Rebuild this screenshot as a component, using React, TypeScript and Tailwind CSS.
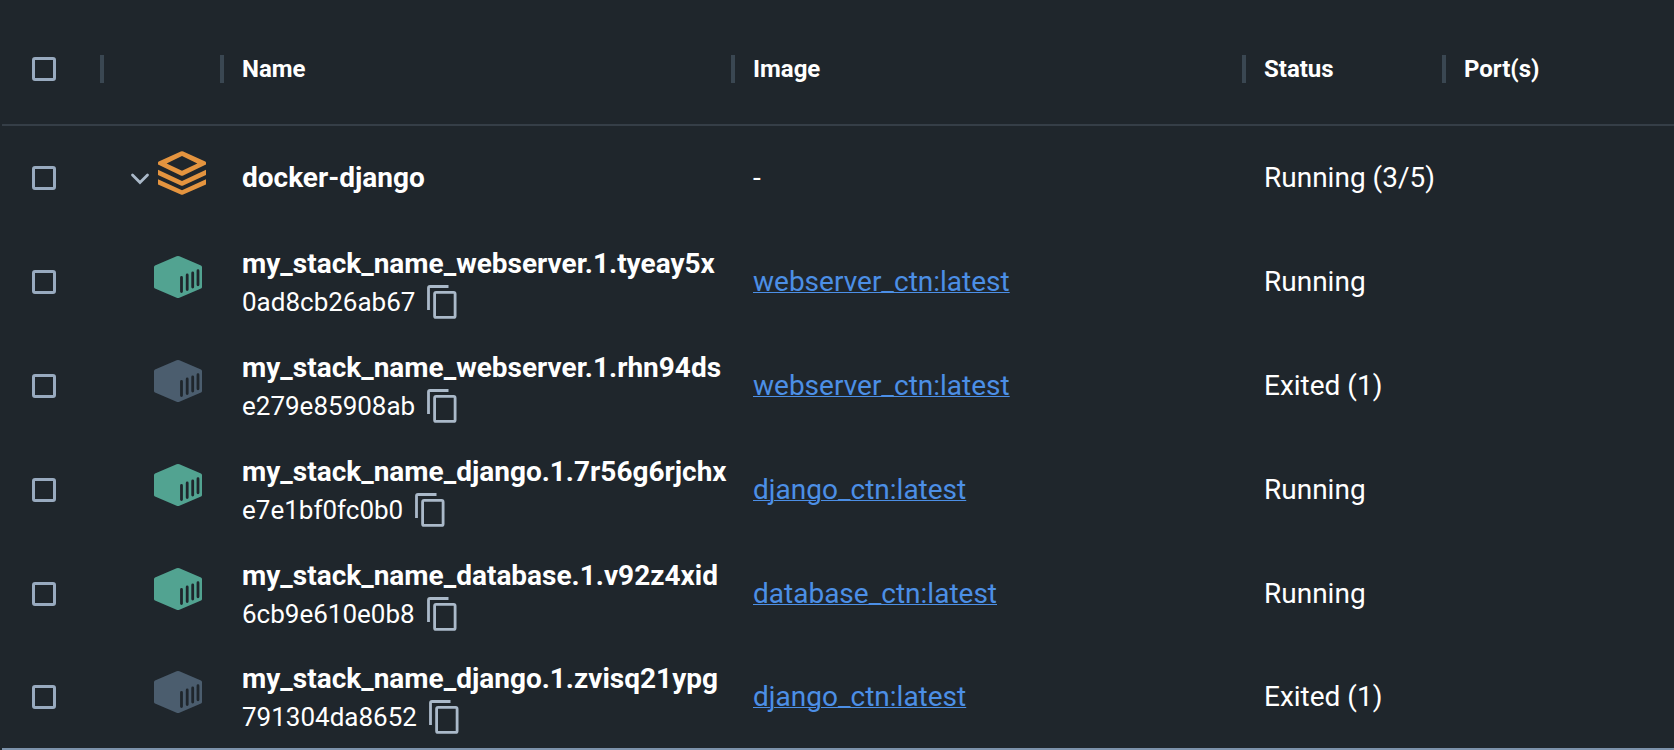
import React from "react";

type Container = { name: string; id: string; image: string; status: string; running: boolean };

const containers: Container[] = [
  { name: "my_stack_name_webserver.1.tyeay5x", id: "0ad8cb26ab67", image: "webserver_ctn:latest", status: "Running", running: true },
  { name: "my_stack_name_webserver.1.rhn94ds", id: "e279e85908ab", image: "webserver_ctn:latest", status: "Exited (1)", running: false },
  { name: "my_stack_name_django.1.7r56g6rjchx", id: "e7e1bf0fc0b0", image: "django_ctn:latest", status: "Running", running: true },
  { name: "my_stack_name_database.1.v92z4xid", id: "6cb9e610e0b8", image: "database_ctn:latest", status: "Running", running: true },
  { name: "my_stack_name_django.1.zvisq21ypg", id: "791304da8652", image: "django_ctn:latest", status: "Exited (1)", running: false },
];

function Check({ label }: { label: string }) {
  return (
    <input
      type="checkbox"
      aria-label={label}
      className="block size-6 appearance-none rounded-[3px] border-[3px] border-[#98aabf] bg-transparent checked:bg-[#98aabf]"
    />
  );
}

function StackIcon() {
  return (
    <svg width="48" height="44" viewBox="0 0 48 44" fill="#e4943f" aria-hidden="true">
      <path fillRule="evenodd" d="M22.800.5Q24 0 25.200.5L47.300 10.600Q48 11 48 11.600V13.400L25.200 24.500Q24 25 22.800 24.500L0 13.400V11.600Q0 11 .7 10.600ZM24 5 8.600 12.400 24 19.800 39.400 12.400Z" />
      <path d="M0 18.800 24 30 48 18.800V24L25.200 34.500Q24 35 22.800 34.500L0 24Z" />
      <path d="M0 28.300 24 39.200 48 28.300V33.500L25.200 43.500Q24 44 22.800 43.500L0 33.500Z" />
    </svg>
  );
}

function ContainerIcon({ running }: { running: boolean }) {
  return (
    <svg width="48" height="42" viewBox="0 0 48 42" className={running ? "text-[#52a391]" : "text-[#4b5d6e]"} aria-hidden="true">
      <path fill="currentColor" d="M22.600.3Q24-.3 25.400.3L47 9.500Q48 10 48 11V31Q48 32 47 32.500L25.400 41.700Q24 42.300 22.600 41.700L1 32.500Q0 32 0 31V11Q0 10 1 9.500Z" />
      <path d="M27.500 21.500V35.500M33.200 19V33.500M38.700 17V31M44 14.700V28.800" stroke="#1f262c" strokeWidth="2.800" strokeLinecap="round" />
    </svg>
  );
}

function CopyIcon() {
  return (
    <svg width="30" height="34" viewBox="0 0 30 34" fill="none" stroke="#aab9c9" strokeWidth="2.800" aria-hidden="true">
      <path d="M1.500 25V3Q1.500 1.500 3 1.500H21.500" />
      <rect x="7.600" y="7.400" width="20.500" height="25" rx="1.500" />
    </svg>
  );
}

function Head({ children, label, last }: { children?: React.ReactNode; label?: string; last?: boolean }) {
  return (
    <th scope="col" aria-label={label} className="relative h-[126px] border-b-2 border-[#353e47] pt-3.5 pl-5 text-left text-2xl font-bold">
      {children}
      {!last && <span className="absolute top-[55px] -right-0.5 z-10 h-7 w-1 bg-[#3a4752]" />}
    </th>
  );
}

export default function App() {
  return (
    <main className="min-h-screen bg-[#1f262c] pl-0.5 font-[Roboto,sans-serif] text-white">
      <table className="w-full table-fixed border-separate border-spacing-0 border-b-2 border-[#7c92ab] text-[28px]">
        <colgroup>
          <col className="w-[100px]" />
          <col className="w-[120px]" />
          <col className="w-[511px]" />
          <col className="w-[511px]" />
          <col className="w-[200px]" />
          <col />
        </colgroup>
        <thead>
          <tr>
            <Head><div className="pl-2.5"><Check label="Select all containers" /></div></Head>
            <Head label="Type" />
            <Head>Name</Head>
            <Head>Image</Head>
            <Head>Status</Head>
            <Head last>Port(s)</Head>
          </tr>
        </thead>
        <tbody>
          <tr className="h-[104px]">
            <td className="pl-[30px]"><Check label="Select docker-django" /></td>
            <td>
              <div className="flex items-center justify-end gap-2 pr-4 pb-2.5">
                <button type="button" aria-label="Collapse docker-django" className="mt-3">
                  <svg width="20" height="14" viewBox="0 0 20 14" fill="none" stroke="#aab9c9" strokeWidth="2.800" strokeLinecap="round" aria-hidden="true">
                    <path d="M2.500 3 10 10.500 17.500 3" />
                  </svg>
                </button>
                <StackIcon />
              </div>
            </td>
            <td className="pl-5 font-bold">docker-django</td>
            <td className="pl-5">-</td>
            <td className="pl-5 whitespace-nowrap">Running (3/5)</td>
            <td />
          </tr>
          {containers.map((c) => (
            <tr key={c.id} className="h-[104px] last:h-[102px]">
              <td className="pl-[30px]"><Check label={`Select ${c.name}`} /></td>
              <td>
                <div className="flex justify-end pr-5 pb-2.5"><ContainerIcon running={c.running} /></div>
              </td>
              <td className="overflow-hidden pt-1 pl-5">
                <div className="leading-9 font-bold whitespace-nowrap">{c.name}</div>
                <div className="flex items-center gap-3 text-[26px] leading-10">
                  {c.id}
                  <button type="button" aria-label={`Copy ${c.id}`}><CopyIcon /></button>
                </div>
              </td>
              <td className="pl-5">
                <a href="#" className="text-[#4c8fe6] underline decoration-1 underline-offset-1">{c.image}</a>
              </td>
              <td className="pl-5 whitespace-nowrap">{c.status}</td>
              <td />
            </tr>
          ))}
        </tbody>
      </table>
    </main>
  );
}
